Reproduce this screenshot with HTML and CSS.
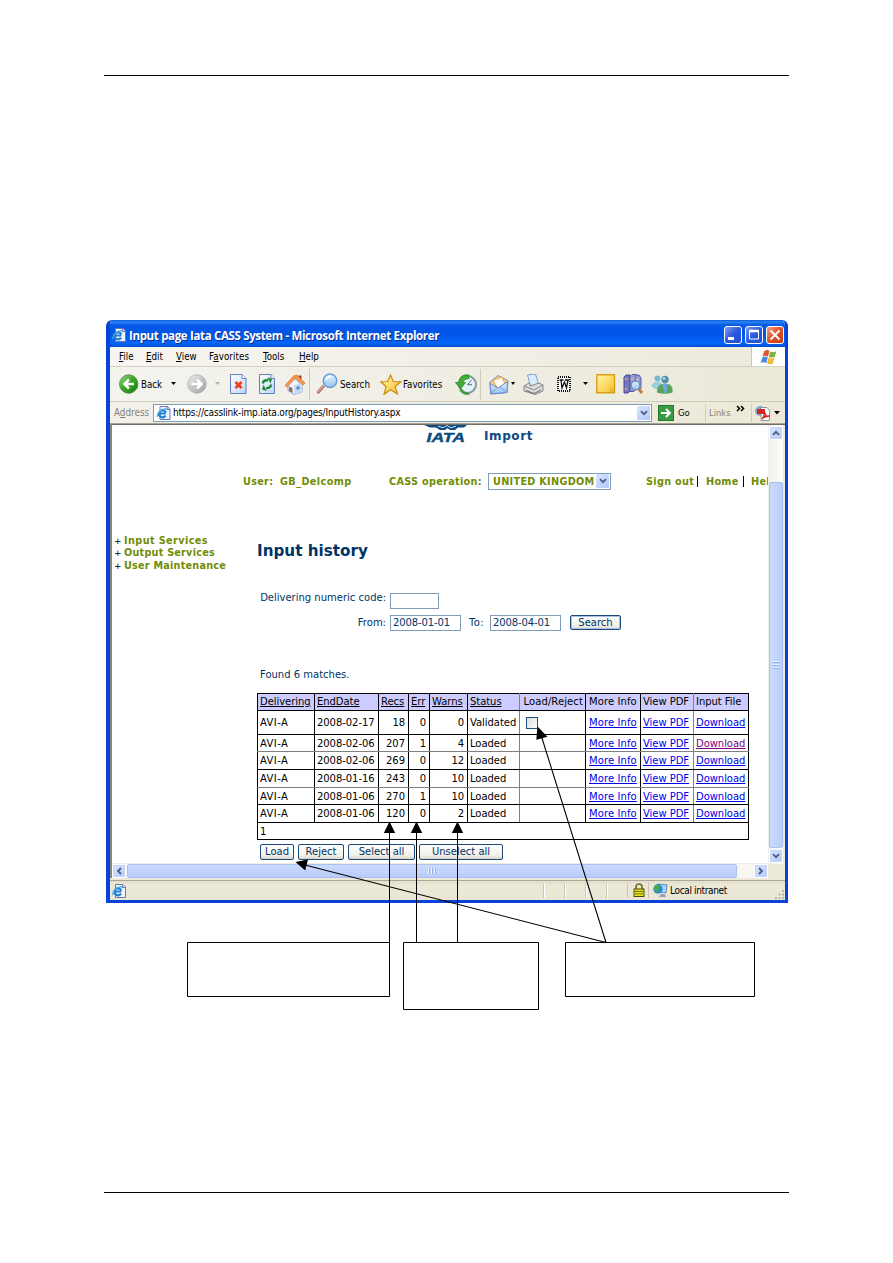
FILE: index.html
```
<!DOCTYPE html>
<html lang="en">
<head>
<meta charset="utf-8">
<title>Input page Iata CASS System</title>
<link rel="stylesheet" href="styles.css">
</head>
<body>
<svg class="defs" width="0" height="0">
  <defs>
    <linearGradient id="green" x1="0" y1="0" x2="1" y2="1"><stop offset="0" stop-color="#a5dc8c"/><stop offset=".45" stop-color="#3fa52e"/><stop offset="1" stop-color="#127c0c"/></linearGradient>
    <linearGradient id="grey" x1="0" y1="0" x2="1" y2="1"><stop offset="0" stop-color="#efefef"/><stop offset="1" stop-color="#9c9c9c"/></linearGradient>
    <linearGradient id="sheet" x1="0" y1="0" x2="1" y2="1"><stop offset="0" stop-color="#fff"/><stop offset="1" stop-color="#bcd3fb"/></linearGradient>
    <linearGradient id="gold" x1="0" y1="0" x2="1" y2="1"><stop offset="0" stop-color="#fff6a8"/><stop offset="1" stop-color="#f8c02c"/></linearGradient>
    <linearGradient id="sky" x1="0" y1="0" x2="0" y2="1"><stop offset="0" stop-color="#e6f5ff"/><stop offset="1" stop-color="#8fc3f1"/></linearGradient>
    <symbol id="ie" viewBox="0 0 14 14"><path d="M3.500.5h7.500l2.500 2.500v10.500h-10z" fill="#eef3ff" stroke="#6c78b4"/><path d="M10.500.5v3h3" fill="#c9d5ee" stroke="#6c78b4"/><path d="M9.300 7.500H3M9 9.700A3.500 3.500 0 1 1 9.300 6.500" fill="none" stroke="#247fd0" stroke-width="2.200"/><path d="M.8 10.800C0 7 6 2 10.500 3" fill="none" stroke="#45a8e8" stroke-width="1.300"/></symbol>
    <symbol id="chev" viewBox="0 0 8 6"><path d="M1 1.200l3 3 3-3" fill="none" stroke="#4d6185" stroke-width="1.900"/></symbol>
  </defs>
</svg>
<div class="page">
  <div class="rule"></div>
  <main class="window">
    <header class="titlebar">
      <svg class="title-icon" width="14" height="14"><use href="#ie"/></svg>
      <h1>Input page Iata CASS System - Microsoft Internet Explorer</h1>
      <div class="controls">
        <span class="ctl"><svg width="16" height="16"><path d="M3 11.500h6" stroke="#fff" stroke-width="3"/></svg></span>
        <span class="ctl"><svg width="16" height="16"><path d="M3.500 3.500h9v8.500h-9z" fill="none" stroke="#fff"/><path d="M3 4h10" stroke="#fff" stroke-width="2.500"/></svg></span>
        <span class="ctl close"><svg width="16" height="16"><path d="M3.500 3.500l9 9m0-9l-9 9" stroke="#fff" stroke-width="2"/></svg></span>
      </div>
    </header>
    <nav class="menubar">
      <span><u>F</u>ile</span><span><u>E</u>dit</span><span><u>V</u>iew</span><span>F<u>a</u>vorites</span><span><u>T</u>ools</span><span><u>H</u>elp</span>
      <div class="flag"><svg width="18" height="16" viewBox="0 0 18 16"><path d="M4 2.500q3-2.500 5.500-.5L8 7.500q-3-1.500-5.500.3z" fill="#e4572c"/><path d="M10.300 2.500q3 1.500 6-.3l-1.500 5.500q-3 1.700-6 .2z" fill="#79b33d"/><path d="M2.200 8.700q3-2 5.600-.4L6.300 14q-3-1.700-5.700.2z" fill="#4c8ade"/><path d="M8.500 8.800q3 1.500 6 0L13 14.500q-3 1.500-6-.2z" fill="#f2bd33"/></svg></div>
    </nav>
    <div class="toolbar">
      <svg width="20" height="20" viewBox="0 0 20 20"><circle cx="9.700" cy="10" r="9.200" fill="url(#green)" stroke="#388a2b" stroke-width=".8"/><path d="M15 10H6M10 5.500L5.500 10l4.500 4.500" fill="none" stroke="#fff" stroke-width="2.500"/></svg>
      <span>Back</span>
      <svg class="drop" width="7" height="4"><path d="M1 0h5L3.500 3z"/></svg>
      <svg width="20" height="20" viewBox="0 0 20 20"><circle cx="10" cy="10" r="9.200" fill="url(#grey)" stroke="#aaa" stroke-width=".8"/><path d="M4.500 10H14M10 5.500l4.500 4.500-4.500 4.500" fill="none" stroke="#fff" stroke-width="2.500"/></svg>
      <svg class="drop" width="7" height="4"><path d="M2 0h5L4.500 3z" fill="#b5b3a8"/></svg>
      <svg width="18" height="20" viewBox="0 0 18 20"><path d="M1.500.5h11.500L17 4.500v15H1.500z" fill="url(#sheet)" stroke="#6480bd"/><path d="M13 .5v4h4" fill="#fff" stroke="#6480bd"/><path d="M6.500 8l6 6m0-6l-6 6" stroke="#ee3f17" stroke-width="2.700"/></svg>
      <svg width="18" height="20" viewBox="0 0 18 20"><path d="M1.500.5h11.500L16.500 4.500v15H1.500z" fill="url(#sheet)" stroke="#6480bd"/><path d="M13 .5v4h3.500" fill="#fff" stroke="#6480bd"/><path d="M4.800 9.500q.5-3.500 5.200-3.200M13 10.500q-.3 3.700-5 3.700" fill="none" stroke="#188a2c" stroke-width="2.300"/><path d="M9.300 3.500l4.700 1.300-1.500 4.700zM8.700 17L4 15.600l1.500-4.800z" fill="#188a2c"/></svg>
      <svg width="22" height="21" viewBox="0 0 22 21"><path d="M14.500 1.500h3v6h-3z" fill="#b53a23"/><path d="M4 10l6-6 8 7v7l-8 2.500-6-4z" fill="#eef4ff" stroke="#8aa6d8"/><path d="M10 11l8-2v9l-8 2.500z" fill="#c7daf8"/><path d="M1 11.500L9.500 2l3.500-1 8 8-2 2-7.500-7L3 13z" fill="#f49a4c" stroke="#d96d31" stroke-width=".7"/><path d="M5 12.500l3.500 1.500v5L5 17z" fill="#9c6a45"/><path d="M12.500 12.500h3v3h-3z" fill="#5b83c7"/></svg>
      <i class="sep"></i>
      <svg width="23" height="22" viewBox="0 0 23 22"><path d="M1.500 20L8 12.500" stroke="#af6e67" stroke-width="3"/><path d="M2 19l6-7" stroke="#f2c6ae" stroke-width="1"/><circle cx="14" cy="7.800" r="6.700" fill="url(#sky)" stroke="#6e9bd5" stroke-width="1.500"/><path d="M10 7q1-3.500 4.500-3.500" fill="none" stroke="#fff" stroke-width="1.500"/></svg>
      <span>Search</span>
      <svg width="22" height="21" viewBox="0 0 22 21"><path d="M10.500 1l2.800 6.500 7.700.3-6 4.700 2.500 7.500-7-4.200L4 20.300l2.200-7.600L.8 7.800 7.700 7.500z" fill="url(#gold)" stroke="#ca8a13" stroke-width="1.200"/></svg>
      <span>Favorites</span>
      <svg width="22" height="21" viewBox="0 0 22 21"><circle cx="12.500" cy="10.500" r="8.500" fill="#e5f3f7" stroke="#8197a0" stroke-width="1.800"/><path d="M16.500 6l-4 4.700h4.500" fill="none" stroke="#54747e"/><path d="M14 1Q5-.5 3.500 8.500H.5l5 6.500 5-6.500H7.600Q9 4.500 14 4.500zM6.500 15q3 5 8 5-6 1.500-9.500-3.500z" fill="#42ad36" stroke="#187e18" stroke-width=".7"/></svg>
      <i class="sep"></i>
      <svg width="20" height="21" viewBox="0 0 20 21"><path d="M1 8l8-6.500L18 6l1 .5-1 12L1.500 20z" fill="#f8cf82" stroke="#7f91d6"/><path d="M4 6.500l9-3.500 3 7-7 5z" fill="#fffdf3" stroke="#e9a140"/><path d="M1 9.500l8 4.500 9.500-6.500-.5 11L2 20z" fill="url(#sky)" stroke="#6687cb"/><path d="M2 19.500l6-6m3-.5l7 5.500" stroke="#759bd5" fill="none"/></svg>
      <svg class="drop" width="6" height="4"><path d="M1 0h4L3 3z"/></svg>
      <svg width="21" height="21" viewBox="0 0 21 21"><path d="M4.500 1l8-1 3 10-8 2z" fill="#dceaff" stroke="#7d9cd3"/><path d="M1 12l5-3 1.500 3 8.500-3 4 2v6l-8 3.500L1 17z" fill="#dcdcd8" stroke="#858585"/><path d="M1 12l10 4 9-5" fill="none" stroke="#888"/><path d="M3 16.500l8 3 7-3.500" fill="none" stroke="#666"/></svg>
      <svg width="16" height="18" viewBox="0 0 16 18"><rect x="2" y="2" width="12" height="14" fill="#fff" stroke="#111" stroke-dasharray="1 1" stroke-width="2"/><path d="M3.500 5h4M9 5h4M5 5l1 8 2.500-6 2 6 1.500-8" fill="none" stroke="#111" stroke-width="1.300"/></svg>
      <svg class="drop" width="7" height="4"><path d="M1 0h5L3.500 3z"/></svg>
      <svg width="20" height="20" viewBox="0 0 20 20"><path d="M.8.800h17.700v17.900H.8z" fill="url(#gold)" stroke="#d79f13" stroke-width="1.400"/><path d="M14.500 18.500l.3-3.500 3.700.3z" fill="#fff3a2" stroke="#d79f13"/></svg>
      <svg width="21" height="21" viewBox="0 0 21 21"><path d="M1 3l2-2h4v16l-2 2H1z" fill="#7476c0" stroke="#454b94"/><path d="M7 2.500L9 .5h4v15l-2 2H7zM13 1h3l2 3v11" fill="#9a9bd4" stroke="#555aa2"/><path d="M1.500 5h3m-3 10h3m3-10h3" stroke="#e9c66c"/><path d="M15 14l4 5" stroke="#b48142" stroke-width="3"/><circle cx="12.500" cy="11.500" r="4.300" fill="url(#sky)" stroke="#6e8bb7" stroke-width="1.300"/></svg>
      <svg width="22" height="21" viewBox="0 0 22 21"><circle cx="6.500" cy="4.500" r="3" fill="#76b8d1"/><path d="M0 12q2-4.500 6.500-4.500T12 13l-2 2H4z" fill="#9bd0e0"/><circle cx="14" cy="5.500" r="3.700" fill="#538fa9"/><path d="M6 18.500q-.5-9 8-9t7.500 9q-8 2.500-15.500 0z" fill="#59a35a"/><path d="M11 10l2.500 9h2l1.500-9z" fill="#6aa8d8"/><circle cx="13" cy="4.500" r="1.400" fill="#a9d6dc"/></svg>
    </div>
    <div class="address">
      <span class="addr-label">A<u>d</u>dress</span>
      <div class="addr-field"><svg width="15" height="14"><use href="#ie"/></svg><span>https://casslink-imp.iata.org/pages/InputHistory.aspx</span><b class="pick"><svg width="8" height="6"><use href="#chev"/></svg></b></div>
      <svg class="go-icon" width="16" height="16"><rect x=".5" y=".5" width="15" height="15" fill="#3a9a45" stroke="#1c7928"/><path d="M3 8h9M8 4l4 4-4 4" fill="none" stroke="#fff" stroke-width="1.800"/></svg>
      <span class="go">Go</span>
      <div class="links">Links</div><svg class="more" width="9" height="8"><path d="M1 1l2.500 2.500L1 6M5 1l2.500 2.500L5 6" fill="none" stroke="#000" stroke-width="1.500"/></svg>
      <div class="pdf"><svg width="16" height="16" viewBox="0 0 16 16"><circle cx="5" cy="6" r="5" fill="#81abd4"/><path d="M6 2.500h6l2.500 3v10H6z" fill="#fff" stroke="#939393"/><path d="M2 4h8v5H2z" fill="#d42622"/><path d="M7 14q3-4 2.500-7 1 5 5 4-5 0-7.500 3z" fill="none" stroke="#d51d1d" stroke-width="1.300"/></svg><svg width="6" height="4"><path d="M0 0h6L3 3.500z"/></svg></div>
    </div>
    <div class="viewport">
      <div class="document">
        <div class="brand">
          <svg width="46" height="24" viewBox="0 0 46 24"><path d="M0 0h43l-3 2.500h-6L31 5h-5l-2.500-2L21 5h-5l-4-2.500H6z" fill="#0d4b80"/><path d="M14 1.200l5 1.500 4-2.200 4 2.200 5-1.500" stroke="#cfe0eb" fill="none"/><text x="2.500" y="16.600" textLength="38.500" lengthAdjust="spacingAndGlyphs" class="iata">IATA</text></svg>
          <span>Import</span>
        </div>
        <div class="userbar">
          <span class="u-user">User:</span><span class="u-name">GB_Delcomp</span><span class="u-op">CASS operation:</span>
          <div class="country"><span>UNITED KINGDOM</span><b class="pick"><svg width="8" height="6"><use href="#chev"/></svg></b></div>
          <span class="u-out">Sign out</span><span class="u-home">Home</span><span class="u-help">Help</span>
        </div>
        <div class="columns">
          <ul class="services"><li><i>+</i>Input Services</li><li><i>+</i>Output Services</li><li><i>+</i>User Maintenance</li></ul>
          <section class="main">
            <h2>Input history</h2>
            <div class="form-row first"><label>Delivering numeric code:</label><div class="box short"></div></div>
            <div class="form-row"><label>From:</label><div class="box">2008-01-01</div><span class="to">To:</span><div class="box">2008-04-01</div><button class="search">Search</button></div>
            <p>Found 6 matches.</p>
            <table>
              <colgroup><col class="c1"><col class="c2"><col class="c3"><col class="c4"><col class="c5"><col class="c6"><col class="c7"><col class="c8"><col class="c9"><col class="c10"></colgroup>
              <tr class="head"><th><u>Delivering</u></th><th><u>EndDate</u></th><th><u>Recs</u></th><th><u>Err</u></th><th><u>Warns</u></th><th><u>Status</u></th><th>Load/Reject</th><th>More Info</th><th>View PDF</th><th>Input File</th></tr>
              <tr class="h24"><td>AVI-A</td><td>2008-02-17</td><td>18</td><td>0</td><td>0</td><td>Validated</td><td><span class="check"></span></td><td><a>More Info</a></td><td><a>View PDF</a></td><td><a>Download</a></td></tr>
              <tr class="h17 soft"><td>AVI-A</td><td>2008-02-06</td><td>207</td><td>1</td><td>4</td><td>Loaded</td><td></td><td><a>More Info</a></td><td><a>View PDF</a></td><td><a class="visited">Download</a></td></tr>
              <tr class="h18"><td>AVI-A</td><td>2008-02-06</td><td>269</td><td>0</td><td>12</td><td>Loaded</td><td></td><td><a>More Info</a></td><td><a>View PDF</a></td><td><a>Download</a></td></tr>
              <tr class="h18 soft"><td>AVI-A</td><td>2008-01-16</td><td>243</td><td>0</td><td>10</td><td>Loaded</td><td></td><td><a>More Info</a></td><td><a>View PDF</a></td><td><a>Download</a></td></tr>
              <tr class="h17"><td>AVI-A</td><td>2008-01-06</td><td>270</td><td>1</td><td>10</td><td>Loaded</td><td></td><td><a>More Info</a></td><td><a>View PDF</a></td><td><a>Download</a></td></tr>
              <tr class="h18"><td>AVI-A</td><td>2008-01-06</td><td>120</td><td>0</td><td>2</td><td>Loaded</td><td></td><td><a>More Info</a></td><td><a>View PDF</a></td><td><a>Download</a></td></tr>
              <tr class="h17"><td colspan="10">1</td></tr>
            </table>
            <div class="actions"><button class="b1">Load</button><button class="b2">Reject</button><button class="b3">Select all</button><button class="b4">Unselect all</button></div>
          </section>
        </div>
      </div>
      <div class="vscroll">
        <b class="arrow"><svg width="8" height="6"><use href="#chev" transform="rotate(180 4 3)"/></svg></b>
        <div class="vthumb"><svg width="6" height="8"><path d="M0 .5h6M0 3.500h6M0 6.500h6" stroke="#eef4fe"/><path d="M0 1.500h6M0 4.500h6M0 7.500h6" stroke="#8cb0f8"/></svg></div>
        <b class="arrow"><svg width="8" height="6"><use href="#chev"/></svg></b>
      </div>
    </div>
    <div class="hscroll">
      <b class="arrow"><svg width="8" height="8"><path d="M6 1L3 4l3 3" fill="none" stroke="#4d6185" stroke-width="1.900"/></svg></b>
      <div class="hthumb"><svg width="8" height="6"><path d="M.5 0v6M3.500 0v6M6.500 0v6" stroke="#eef4fe"/><path d="M1.500 0v6M4.500 0v6M7.500 0v6" stroke="#8cb0f8"/></svg></div>
      <b class="arrow last"><svg width="8" height="8"><path d="M2 1l3 3-3 3" fill="none" stroke="#4d6185" stroke-width="1.900"/></svg></b>
      <div class="corner"></div>
    </div>
    <footer class="status">
      <svg class="page-icon" width="14" height="14"><use href="#ie"/></svg>
      <i></i><i></i><i></i><i></i>
      <div class="lock"><svg width="12" height="14" viewBox="0 0 12 14"><path d="M3 6V4q0-3 3-3t3 3v2" fill="none" stroke="#706d20" stroke-width="1.700"/><rect x="1" y="6" width="10" height="7.500" fill="#e7e121" stroke="#4c4909"/><path d="M2 8.500h8M2 10.900h8" stroke="#77720e"/></svg></div>
      <div class="zone"><svg width="15" height="15" viewBox="0 0 15 15"><path d="M5 1l9 1-1 8-8-1z" fill="#9bdcff" stroke="#6988b7"/><path d="M8 11l4 .5 1 2.500H6z" fill="#9098c0"/><circle cx="5" cy="6" r="4.700" fill="#2e86d8"/><path d="M1 4l3-2.500L7 3 5 6l1 2-3 1-2-3z" fill="#47ae46"/></svg><span>Local intranet</span></div>
      <svg class="grip" width="11" height="11"><path d="M8 1h2v2H8zM4.500 4.500h2v2h-2zM8 4.500h2v2H8zM1 8h2v2H1zM4.500 8h2v2h-2zM8 8h2v2H8z" fill="#b8b4a2"/></svg>
    </footer>
  </main>
  <div class="rule bottom"></div>
  <svg class="callouts" width="893" height="1263" viewBox="0 0 893 1263">
    <g fill="none" stroke="#000"><path d="M187.500 942.500h202v54h-202zM403.500 942.500h135v67h-135zM565.500 942.500h189v54h-189zM389.500 943V830M416.500 943V830M457.500 943V830"/><path d="M606 942.500L305 865M606 942.500L541 735" stroke-width="1.100"/></g>
    <path d="M389.500 821.500l5.700 11.500h-11.400zM416.500 821.500l5.700 11.500h-11.400zM457.500 821.500l5.700 11.500h-11.400zM295.500 862l12.500-2.500-2.800 11zM537.500 726.500l10 10.300-11.200 3z"/>
  </svg>
</div>
</body>
</html>
```
FILE: styles.css
```
* { box-sizing: border-box; }
body { margin: 0; background: #fff; }
svg { display: block; flex: none; }
.defs { position: absolute; }
h1, h2, p, ul, button { margin: 0; padding: 0; }
i { font-style: normal; }
.page { position: relative; width: 893px; height: 1263px; overflow: hidden; padding: 75px 104px 0; }
.rule { height: 1px; background: #000; }
.rule.bottom { margin-top: 289px; }
.window { width: 682px; height: 583px; margin: 244px 0 0 2px; display: flex; flex-direction: column; background: #ece9d8; border: solid #0842d8; border-width: 0 3px 3px 4px; border-radius: 6px 6px 0 0; overflow: hidden; font: 10px "DejaVu Sans Condensed", "DejaVu Sans", sans-serif; color: #000; }
.window span, .window a, .window th, .window button { white-space: nowrap; }

.titlebar { height: 27px; flex: none; margin: 0 -3px 0 -4px; padding: 3px 4px 0 6px; display: flex; align-items: center; background: linear-gradient(#0a58d8 0, #2a83f5 2px, #0759e6 5px, #0155e6 14px, #0465fc 23px, #0450cd); }
.title-icon { margin-right: 3px; }
.titlebar h1 { flex: 1; font: bold 11.500px "Open Sans", sans-serif; letter-spacing: -.34px; color: #fff; white-space: nowrap; text-shadow: 1px 1px #07318f; }
.controls { display: flex; gap: 3px; }
.ctl { width: 18px; height: 18px; border: 1px solid #fff; border-radius: 3px; background: linear-gradient(135deg, #7d9ef0, #2a58dd 50%, #2251d5); overflow: hidden; }
.ctl.close { background: linear-gradient(135deg, #f0a284, #e04f24 50%, #c93c10); }

.menubar { height: 20px; flex: none; display: grid; grid-template-columns: 27px 30px 33px 54px 36px 1fr 34px; padding-left: 9px; align-items: center; border-bottom: 1px solid #d3d0bf; background: linear-gradient(90deg, #f6f5f1, #eceadd); }
.menubar span { font-size: 9.700px; }
.menubar span:nth-child(4) { letter-spacing: .1px; }
.flag { align-self: stretch; background: #fff; border-left: 1px solid #cac7b7; display: flex; align-items: center; padding-left: 8px; }

.toolbar { height: 35px; flex: none; display: grid; grid-template-columns: 22px 29px 17px 26px 16px 29px 26px 25px 7px 24px 40px 23px 52px 25px 9px 21px 13px 33px 26px 14px 27px 28px 1fr; padding-left: 9px; align-items: center; border-bottom: 1px solid #cfccbb; background: linear-gradient(90deg, #f4f3ee, #ebe9d9); }
.toolbar span { font-size: 9.700px; }
.sep { width: 1px; height: 31px; background: #cecbba; }

.address { height: 22px; flex: none; display: flex; align-items: center; padding-left: 4px; border-bottom: 1px solid #a7a393; background: linear-gradient(90deg, #f2f1ea, #ece9d8); }
.addr-label { width: 39px; color: #85837a; font-size: 9.800px; }
.addr-field { width: 499px; height: 18px; border: 1px solid #7f9db9; background: #fff; display: flex; align-items: center; padding: 0 1px 0 2px; }
.addr-field span { flex: 1; margin-left: 2px; letter-spacing: -.18px; }
.pick { width: 13px; height: 14px; flex: none; border-radius: 1px; background: linear-gradient(135deg, #d9e4ff, #b3c8f8); display: flex; align-items: center; justify-content: center; }
.go-icon { margin-left: 6px; }
.go { margin-left: 4px; width: 27px; font-size: 9.500px; }
.links { width: 31px; height: 18px; line-height: 17px; border-left: 1px solid #cfccbb; padding-left: 3px; color: #85837a; font-size: 9.300px; }
.more { margin: 0 6px 7px 0; }
.pdf { height: 18px; display: flex; align-items: center; gap: 3px; border-left: 1px solid #cfccbb; padding-left: 3px; }

.viewport { height: 440px; flex: none; display: flex; border-left: 2px solid #8a877a; border-top: 1px solid #716f64; }
.document { width: 656px; overflow: hidden; background: #fff; font: 10px "DejaVu Sans", sans-serif; color: #003366; border-bottom: 1px solid #eeede5; }
.brand { height: 37px; display: flex; padding-left: 312px; }
.iata { font: italic bold 13.500px "Liberation Sans", sans-serif; fill: #0d4b80; stroke: #0d4b80; stroke-width: .4px; }
.brand span { margin: 4px 0 0 14px; font-weight: bold; font-size: 12px; letter-spacing: .6px; color: #0b4a80; }
.userbar { height: 38px; display: flex; align-items: center; padding-left: 131px; font-weight: bold; color: #718c05; font-size: 9.700px; letter-spacing: .3px; }
.userbar > * { flex: none; }
.u-user { width: 37px; }
.u-name { width: 109px; letter-spacing: .4px; }
.u-op { width: 99px; }
.country { width: 123px; height: 17px; border: 1px solid #7f9db9; background: #fff; display: flex; align-items: center; justify-content: space-between; padding: 0 1px 0 4px; }
.u-out { margin-left: 35px; width: 52px; border-right: 1px solid #000; }
.u-home { padding-left: 8px; width: 46px; border-right: 1px solid #000; }
.u-help { padding-left: 7px; }
.columns { display: flex; }
.services { width: 145px; padding: 35px 0 0 2px; list-style: none; font-weight: bold; color: #718c05; line-height: 12.400px; font-size: 9.700px; letter-spacing: .22px; }
.services li:first-child { letter-spacing: .4px; }
.services i { display: inline-block; width: 10px; color: #000; font-weight: normal; font-size: 9px; }
.main { width: 492px; flex: none; }
h2 { height: 93px; padding-top: 41px; font-size: 15.200px; line-height: 20px; white-space: nowrap; }
.form-row { display: flex; height: 16px; }
.form-row.first { margin-bottom: 6px; }
.form-row label { width: 133px; padding-right: 4px; text-align: right; line-height: 15px; white-space: nowrap; }
.form-row.first label { line-height: 9px; }
.box { width: 71px; height: 16px; border: 1px solid #7f9db9; padding-left: 2px; line-height: 14px; letter-spacing: -.1px; }
.box.short { width: 49px; }
.to { width: 29px; padding-left: 8px; line-height: 15px; letter-spacing: .4px; }
button { font: 10px "DejaVu Sans", sans-serif; color: #003366; border: 1px solid #1b4a79; border-radius: 2px; background: linear-gradient(#fff, #f1f0e8 75%, #d9d5c8); line-height: 12px; height: 16px; }
.search { width: 51px; margin-left: 9px; height: 15px; box-shadow: inset 0 0 0 1px #a7c2ef; }
p { height: 62px; padding: 37px 0 0 3px; line-height: 13px; }
table { width: 492px; border-collapse: collapse; table-layout: fixed; color: #000; letter-spacing: -.05px; }
.c1 { width: 57px; } .c2 { width: 64px; } .c3 { width: 30px; } .c4 { width: 21px; } .c5 { width: 38px; } .c6 { width: 52px; } .c7 { width: 66px; } .c8 { width: 55px; } .c9 { width: 53px; } .c10 { width: 55px; }
th, td { border: 1px solid #000; padding: 0 3px 0 2px; font-weight: normal; line-height: 12px; text-align: left; overflow: hidden; white-space: nowrap; }
th:nth-child(6), td:nth-child(6), th:nth-child(9), td:nth-child(9) { border-right-color: #808080; }
.soft td { border-bottom-color: #808080; }
.head { height: 17px; background: #ccccff; }
.h17 { height: 17px; } .h18 { height: 18px; } .h24 { height: 24px; }
.h17 td, .h18 td { padding-top: 1px; }
td:first-child { letter-spacing: .4px; }
td:nth-child(3), td:nth-child(4), td:nth-child(5) { text-align: right; }
th:nth-child(7), th:nth-child(8), td:nth-child(8) { padding: 0 0 0 3px; letter-spacing: .1px; }
.h17 td:nth-child(8), .h18 td:nth-child(8) { padding-top: 1px; }
th:nth-child(7) { padding-left: 3.500px; }
a { color: #0000e8; text-decoration: underline; }
.visited { color: #800080; }
.check { display: block; width: 12px; height: 12px; margin-left: 4px; border: 1px solid #1c5180; background: linear-gradient(135deg, #dcdcd7, #fff); }
.actions { display: flex; gap: 4px; padding: 4px 0 0 3px; }
.b1 { width: 34px; } .b2 { width: 46px; } .b3 { width: 67px; } .b4 { width: 84px; }

.vscroll { width: 15px; padding: 1px 0 1px 1px; display: flex; flex-direction: column; background: linear-gradient(90deg, #f0efe8, #fefefb); }
.arrow { width: 14px; height: 14px; flex: none; border: 1px solid #fff; outline: 1px solid #c3d3fb; outline-offset: -2px; border-radius: 2px; background: linear-gradient(135deg, #dbe5ff, #b4c9fa); display: flex; align-items: center; justify-content: center; }
.vthumb { flex: 1; margin: 42px 0 1px 0; border: 1px solid #a9c1f1; border-radius: 2px; background: linear-gradient(90deg, #cbdafe, #bacdfb); display: flex; align-items: center; justify-content: center; }
.hscroll { height: 14px; flex: none; display: flex; border-left: 2px solid #8a877a; background: #f7f6f1; }
.hthumb { width: 610px; margin-left: 1px; border: 1px solid #a9c1f1; border-radius: 2px; background: linear-gradient(#cbdafe, #b9ccfb); display: flex; align-items: center; justify-content: center; }
.arrow.last { margin-left: 17px; }
.corner { flex: 1; background: #ece9d8; }
.status { flex: 1; display: flex; align-items: center; margin-top: 2px; border-top: 1px solid #aaa797; background: linear-gradient(#e3dfcd, #ece9d8 5px, #e9e6d4); padding-left: 2px; }
.page-icon { margin-right: 417px; }
.status i { width: 21px; height: 15px; border-left: 1px solid #c9c6b5; box-shadow: inset 1px 0 #fff; }
.lock { width: 21px; height: 15px; border-left: 1px solid #c9c6b5; padding-left: 5px; }
.zone { flex: 1; height: 15px; display: flex; align-items: center; gap: 2px; border-left: 1px solid #c9c6b5; padding-left: 4px; letter-spacing: -.35px; }
.grip { align-self: flex-end; }
.callouts { position: absolute; left: 0; top: 0; pointer-events: none; }
```
